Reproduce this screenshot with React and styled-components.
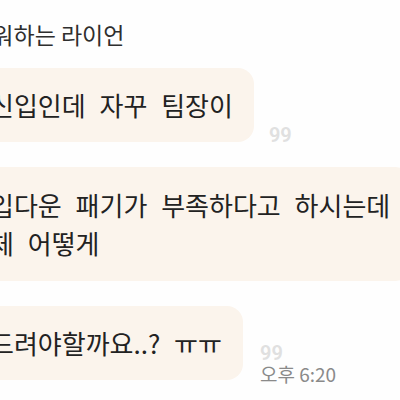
import React from 'react';
import styled, { createGlobalStyle } from 'styled-components';

const GlobalStyle = createGlobalStyle`
  html, body {
    margin: 0;
    padding: 0;
    background: #ffffff;
  }
`;

const Screen = styled.div`
  width: 400px;
  height: 400px;
  overflow: hidden;
  background: #fefefe;
  font-family: "Noto Sans CJK KR", "Noto Sans", sans-serif;
  color: #222;
  display: flex;
  flex-direction: column;
  padding-top: 21px;
  box-sizing: border-box;
`;

const SenderName = styled.div`
  margin-left: -50px;
  font-size: 23px;
  line-height: 26px;
  color: #2e2e2e;
  white-space: nowrap;
`;

const Messages = styled.div`
  display: flex;
  flex-direction: column;
  gap: 25px;
  margin-top: 21px;
  margin-left: -31px;
`;

const Row = styled.div`
  display: flex;
  align-items: flex-end;
  gap: ${(props) => props.gap || 15}px;
`;

const Bubble = styled.div`
  flex-shrink: 0;
  background: #fbf4ec;
  border-radius: 16px;
  padding: ${(props) => props.pad || 18}px 21px;
  font-size: 26px;
  line-height: ${(props) => props.lh || 38}px;
  word-spacing: 8px;
  white-space: nowrap;
`;

const Meta = styled.div`
  display: flex;
  flex-direction: column;
  align-items: flex-start;
  margin-bottom: ${(props) => props.drop || 0}px;
`;

const ReadCount = styled.span`
  font-family: Roboto, "Noto Sans", sans-serif;
  font-weight: 600;
  font-size: 20px;
  line-height: 20px;
  color: #e0e0e0;
`;

const Time = styled.span`
  font-size: 19px;
  line-height: 22px;
  color: #8a8a8a;
  white-space: nowrap;
`;

export default function App() {
  return (
    <Screen>
      <GlobalStyle />
      <SenderName>귀여워하는 라이언</SenderName>
      <Messages>
        <Row>
          <Bubble>신입인데 자꾸 팀장이</Bubble>
          <Meta drop={-3}>
            <ReadCount>99</ReadCount>
          </Meta>
        </Row>
        <Row>
          <Bubble pad={19} lh={38}>
            입다운 패기가 부족하다고 하시는데
            <br />
            체 어떻게
          </Bubble>
        </Row>
        <Row gap={17}>
          <Bubble>드려야할까요..? ㅠㅠ</Bubble>
          <Meta drop={-5}>
            <ReadCount>99</ReadCount>
            <Time>오후 6:20</Time>
          </Meta>
        </Row>
      </Messages>
    </Screen>
  );
}
